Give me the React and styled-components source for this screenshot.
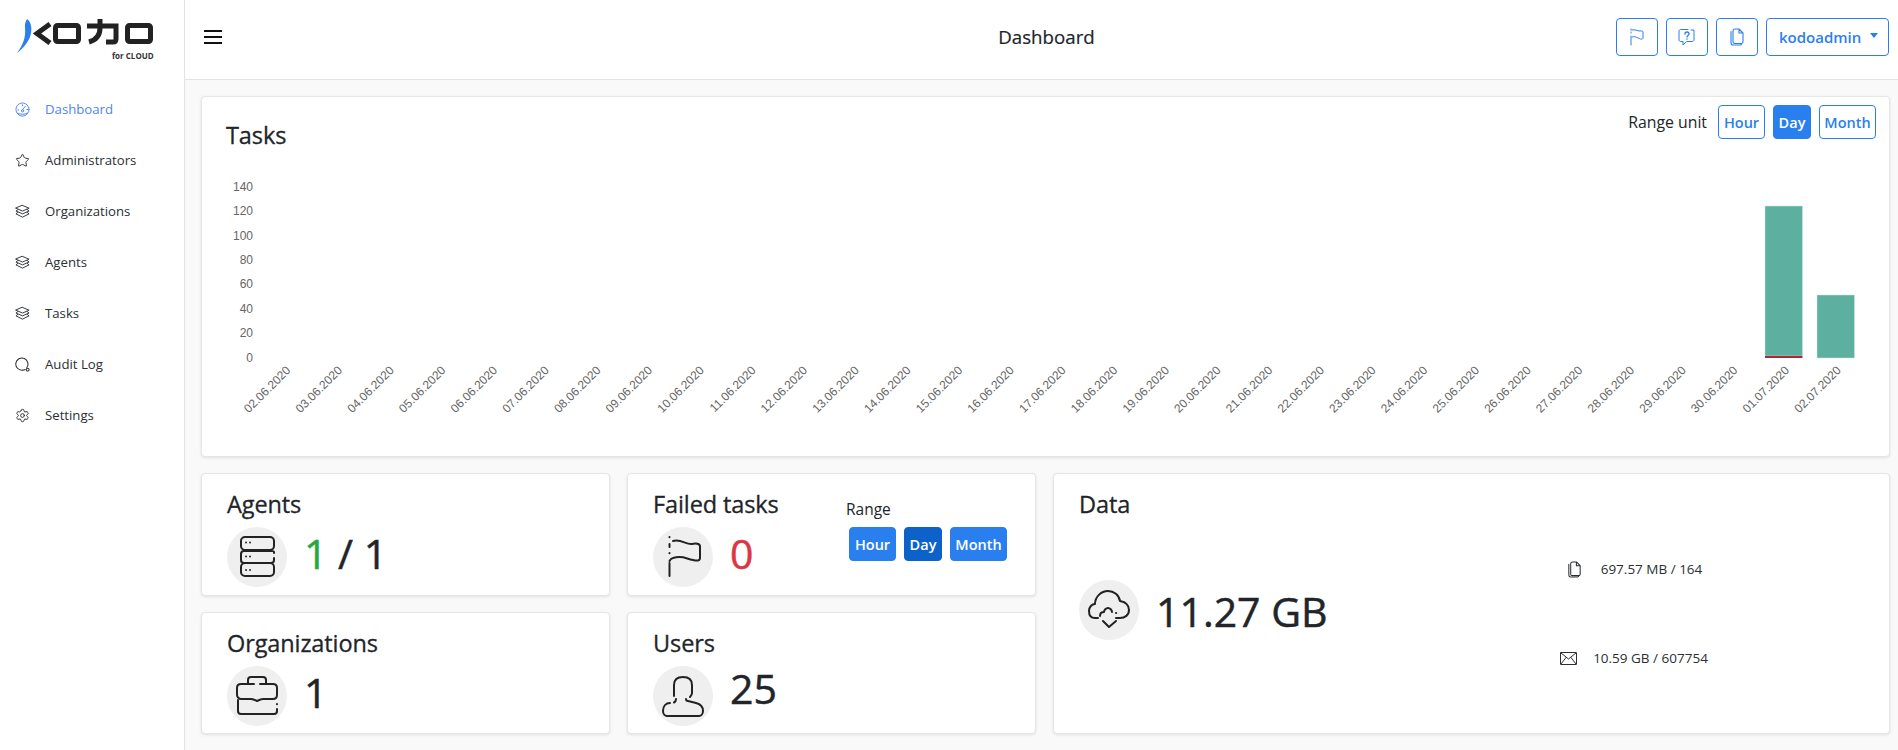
import React from 'react'
import styled, { createGlobalStyle } from 'styled-components'
import { Star, Settings } from 'lucide-react'

const BLUE = '#2a7fef'
const INK = '#212529'
const FONT = `'Open Sans', Lato, sans-serif`

const GlobalStyle = createGlobalStyle`
  * { box-sizing: border-box; }
  html, body { margin: 0; height: 100%; }
  body {
    background: #f9f9f9;
    color: ${INK};
    font-family: ${FONT};
    overflow: hidden;
  }
`

const Shell = styled.div`
  display: grid;
  grid-template-columns: 185px 1fr;
  width: 1898px;
  height: 750px;
`

const Sidebar = styled.aside`
  background: #fff;
  border-right: 1px solid #e3e3e3;
`

const LogoBox = styled.div`
  position: relative;
  height: 83.500px;
  padding: 17px 0 0 16px;
`

const LogoCaption = styled.span`
  position: absolute;
  top: 50px;
  left: 112px;
  font-size: 8px;
  font-weight: 700;
  color: #333;
`

const Nav = styled.nav`
  display: flex;
  flex-direction: column;
`

const NavItem = styled.a`
  display: flex;
  align-items: center;
  gap: 15px;
  height: 51px;
  padding-left: 15px;
  font-size: 13.2px;
  color: ${p => (p.$active ? '#4f86f0' : '#2b2f33')};

  svg {
    flex: none;
    width: 15px;
    height: 15px;
  }
`

const Main = styled.div`
  display: flex;
  flex-direction: column;
  min-width: 0;
`

const Header = styled.header`
  display: grid;
  grid-template-columns: 1fr auto 1fr;
  align-items: center;
  height: 80px;
  padding: 0 9px 6px 19px;
  background: #fff;
  border-bottom: 1px solid #e3e3e3;
`

const Burger = styled.button`
  display: flex;
  flex-direction: column;
  gap: 4px;
  width: 18px;
  padding: 0;
  background: none;
  border: 0;

  span {
    height: 2px;
    background: #111;
  }
`

const PageTitle = styled.h1`
  margin: 0;
  font-size: 18.700px;
  font-weight: 500;
  -webkit-text-stroke: 0.2px ${INK};
`

const HeaderActions = styled.div`
  display: flex;
  justify-content: flex-end;
  gap: 8px;
`

const IconButton = styled.button`
  display: flex;
  align-items: center;
  justify-content: center;
  width: 42px;
  height: 38px;
  padding: 0;
  color: ${BLUE};
  background: #fff;
  border: 1px solid ${BLUE};
  border-radius: 4px;
`

const UserButton = styled.button`
  display: flex;
  align-items: center;
  gap: 9px;
  width: 123px;
  height: 38px;
  padding: 0 0 0 12px;
  font: 600 15px ${FONT};
  color: ${BLUE};
  background: #fff;
  border: 1px solid ${BLUE};
  border-radius: 4px;

  &::after {
    content: '';
    border-top: 5px solid ${BLUE};
    border-left: 4px solid transparent;
    border-right: 4px solid transparent;
    margin-top: -2px;
  }
`

const Content = styled.main`
  display: flex;
  flex-direction: column;
  gap: 16px;
  padding: 16px 8px 0 16px;
`

const Card = styled.section`
  background: #fff;
  border: 1px solid #e6e6e6;
  border-radius: 4px;
  box-shadow: 0 1px 3px rgba(0, 0, 0, 0.1);
`

const TasksCard = styled(Card)`
  height: 361px;
`

const TasksHead = styled.div`
  display: flex;
  justify-content: space-between;
  height: 73px;
  padding: 8px 13px 0 24px;
`

const CardTitle = styled.h2`
  margin: 0;
  font-size: 23.500px;
  line-height: 30px;
  font-weight: 500;
  letter-spacing: -0.1px;
  -webkit-text-stroke: 0.3px ${INK};
`

const TasksTitle = styled(CardTitle)`
  margin-top: 15px;
`

const RangeUnit = styled.div`
  display: flex;
  align-items: center;
  align-self: flex-start;
  gap: 8px;
`

const RangeLabel = styled.span`
  margin-right: 3px;
  font-size: 15.800px;
`

const RangeButton = styled.button`
  height: 34px;
  width: ${p => p.$w}px;
  padding: 0;
  font: 600 14.500px ${FONT};
  color: ${p => (p.$filled ? '#fff' : BLUE)};
  background: ${p => (p.$filled ? (p.$dark ? '#0d62c9' : BLUE) : '#fff')};
  border: 1px solid ${p => (p.$filled ? (p.$dark ? '#0d62c9' : BLUE) : BLUE)};
  border-radius: 4px;
`

const ChartSvg = styled.svg`
  display: block;

  text {
    font-family: 'Liberation Sans', Arial, sans-serif;
    font-size: 12px;
    fill: #666;
  }
`

const StatsGrid = styled.div`
  display: grid;
  grid-template-columns: 409px 409px 1fr;
  grid-template-rows: 123px 122px;
  gap: 16px 17px;
`

const StatCard = styled(Card)`
  position: relative;
  padding: 15px 25px 0;
`

const DataCard = styled(Card)`
  grid-column: 3;
  grid-row: 1 / span 2;
  display: grid;
  grid-template-columns: 1fr 460px;
  padding: 15px 25px 0;
`

const StatRow = styled.div`
  display: flex;
  align-items: center;
  gap: 17px;
  margin-top: 8px;
`

const IconCircle = styled.div`
  flex: none;
  width: 60px;
  height: 60px;
  background: #efefef;
  border-radius: 50%;

  svg {
    display: block;
  }
`

const Value = styled.div`
  position: relative;
  top: ${p => p.$shift ?? -4}px;
  font-size: 41px;
  line-height: 48px;
  font-weight: 500;
  -webkit-text-stroke: 0.5px currentColor;
  color: ${p => p.$color || INK};

  span {
    color: ${p => p.$accent || 'inherit'};
  }
`

const MiniRange = styled.div`
  position: absolute;
  top: 25px;
  left: 221px;
`

const MiniLabel = styled.div`
  margin-left: -3px;
  font-size: 15.500px;
  line-height: 20px;
  margin-bottom: 8px;
`

const MiniButtons = styled.div`
  display: flex;
  gap: 8px;
`

const DataMain = styled.div`
  display: flex;
  flex-direction: column;
`

const DataRow = styled(StatRow)`
  margin-top: 61px;
`

const DataSide = styled.div`
  display: flex;
  flex-direction: column;
  align-items: center;
  gap: 67px;
  padding-top: 69px;
`

const SideItem = styled.div`
  display: flex;
  align-items: center;
  gap: ${p => p.$gap}px;
  height: 22px;
  font-size: 13.500px;
  color: #2b2f33;
`

const Line = { fill: 'none', stroke: 'currentColor', strokeLinecap: 'round', strokeLinejoin: 'round' }

const KodoLogo = () => (
  <svg width="140" height="40" viewBox="0 0 140 40">
    <path d="M1 36C7 28 10 20 9 11c-.4-4 .4-6 2-9 4 3 5 8 4 14-1 7-7 15-14 20z" fill="#2a7fef" />
    <g fill="none" stroke="#222" strokeWidth="5">
      <path d="M34 7 L21 16.5 L34 26" />
      <rect x="39.5" y="8.500" width="23" height="16" rx="2" />
      <path d="M71 9H100V22c0 2-1 3-3 3h-7" />
      <path d="M84 2V11c0 7-4 12-11 14" />
      <rect x="111.500" y="8.500" width="23" height="16" rx="2" />
    </g>
  </svg>
)

const GaugeIcon = () => (
  <svg viewBox="0 0 16 16" {...Line} strokeWidth="1">
    <circle cx="8" cy="8" r="7" />
    <path d="M8 8.500l3-4M3 8.500h1M8 3v1M12.500 8h1M3 12c3 1.500 7 1.500 10 0" />
    <circle cx="8" cy="9.500" r="1.200" />
  </svg>
)

const StackIcon = () => (
  <svg viewBox="0 0 16 16" {...Line} strokeWidth="1">
    <path d="M8 1.500 15 4.500 8 7.500 1 4.500z" />
    <path d="M3 6 1 7.500 8 10.500l7-3L13 6" />
    <path d="M3 9 1 10.500 8 14l7-3.500L13 9" />
  </svg>
)

const SearchIcon = () => (
  <svg viewBox="0 0 16 16" {...Line} strokeWidth="1.100">
    <path d="M12.500 11.500A6.500 6.500 0 1 0 8 14c1 0 2-.2 2.800-.7" />
    <circle cx="13.500" cy="13.500" r="1.500" />
  </svg>
)

const FlagSmall = () => (
  <svg width="16" height="18" viewBox="0 0 16 18" {...Line} strokeWidth="1">
    <path d="M2 1v1M2 4v1M2 8v9" />
    <path d="M3 2c3-1 5 1 8 1 2 0 3 0 3 1v6c0 2-3 1-5 0-2-1-4-2-6-1" />
  </svg>
)

const HelpSmall = () => (
  <svg width="18" height="18" viewBox="0 0 18 18" {...Line} strokeWidth="1">
    <path d="M13 2h3v10c0 1-1 1.500-2 1.500H8.500L5 17v-3.500H3c-1 0-2-.5-2-1.500V3c0-1 1-1.500 2-1.500h7" />
    <path d="M7 6c0-1.200 1-2 2-2s2 .8 2 2c0 1.500-2 1.500-2 3M9 11v.2" strokeWidth="1.300" />
  </svg>
)

const CopySmall = ({ size = 18 }) => (
  <svg width={size} height={size} viewBox="0 0 18 18" {...Line} strokeWidth="1.100">
    <path d="M7 1h4l4 4v9c0 1-1 1.500-2 1.500H7c-1 0-2-.5-2-1.500V3c0-1 1-2 2-2zM11 1v4h4" />
    <path d="M3 3.500v11.500c0 1 1 2 2 2h7c1 0 1.500-.5 1.500-1" />
  </svg>
)

const MailSmall = () => (
  <svg width="17" height="13" viewBox="0 0 17 13" {...Line} strokeWidth="1">
    <rect x="0.500" y="0.500" width="16" height="12" rx="0.500" />
    <path d="M1 1l7.500 6L16 1M1 12l5-6.500M16 12l-5-6.500" />
  </svg>
)

const ServerIcon = () => (
  <svg width="60" height="60" viewBox="0 0 60 60" {...Line} strokeWidth="2" stroke="#222">
    <rect x="14" y="10" width="33" height="13" rx="4" />
    <path d="M47 26v-1c0-1-1-1-3-1H17c-2 0-3 1-3 3v6c0 2 1 3 3 3h27c2 0 3-1 3-3v-2" />
    <rect x="14" y="36" width="33" height="13" rx="4" />
    <path d="M19 15.500h.1M23 15.500h.1M19 29.500h.1M23 29.500h.1M19 43h.1M23 43h.1" strokeWidth="1.800" />
  </svg>
)

const BriefcaseIcon = () => (
  <svg width="60" height="60" viewBox="0 0 60 60" {...Line} strokeWidth="2" stroke="#222">
    <path d="M21 17v-3c0-2 1-3 3-3h12c2 0 3 1 3 3v3" />
    <path d="M33 18h13c2 0 4 1 4 4v7c0 2-1 4-4 4H36c-2 0-4 1-6 2-2-1-4-2-6-2H14c-2 0-4-2-4-4v-7c0-3 2-4 4-4h13" />
    <path d="M11 34v11c0 2 1 3 3 3h33c2 0 3-1 3-3v-2M50 38v.2" />
  </svg>
)

const FlagIcon = () => (
  <svg width="60" height="60" viewBox="0 0 60 60" {...Line} strokeWidth="2" stroke="#222">
    <path d="M16.500 10v.2M16.500 17v3M16.500 26v.2M16.500 36v13" />
    <path d="M20 14c8-2 12 3 18 3 3 0 8-2 9 2v12c0 3-3 3-7 2-7-1-10-5-20-2-2 .5-3 2-3.500 3" />
  </svg>
)

const UserIcon = () => (
  <svg width="60" height="60" viewBox="0 0 60 60" {...Line} strokeWidth="2" stroke="#222">
    <path d="M21 30V19c0-5 3-8 9-8s9 3 9 8v8c0 2-1 3-2 4" />
    <path d="M17 37c-4 0-7 3-7 8 0 3 2 5 4 5h32c2 0 4-2 4-5 0-4-3-7-7-8l-8-2c-1 0-2-1-2-2" />
    <path d="M23 33c0 2-1 3-2 3.500" />
  </svg>
)

const CloudIcon = () => (
  <svg width="60" height="60" viewBox="0 0 60 60" {...Line} strokeWidth="2" stroke="#222">
    <path d="M19 38h-3c-4 0-6-3-6-7 0-4 3-7 6-7 0-7 6-13 13-13 6 0 11 4 12 10 5 1 9 4 9 9s-4 8-9 8h-4" />
    <path d="M21 36c0-3 2-4 4-4 0-2 2-4 4-4s4 2 4 4" />
    <path d="M37 33h.2M24 41l6 6 7-6" />
  </svg>
)

// chart data, one tick per day
const days = []
for (let i = 0; i < 29; i++) days.push(`${String(i + 2).padStart(2, '0')}.06.2020`)
days.push('01.07.2020', '02.07.2020')

const yTicks = [0, 20, 40, 60, 80, 100, 120, 140]
const ORIGIN_X = 202
const ORIGIN_Y = 170
const Y0 = 358 - ORIGIN_Y
const STEP_X = 51.68
const FIRST_X = 284.3 - ORIGIN_X

const TaskChart = () => (
  <ChartSvg width="1687" height="285" viewBox="0 0 1687 285">
    {yTicks.map(t => (
      <text key={t} x={253 - ORIGIN_X} y={Y0 - 0.3 - (t / 20) * 24.43 + 4} textAnchor="end">
        {t}
      </text>
    ))}
    {days.map((d, i) => {
      const x = FIRST_X + i * STEP_X + 7
      const y = 371 - ORIGIN_Y
      return (
        <text key={d} x={x} y={y} textAnchor="end" transform={`rotate(-45 ${x} ${y})`}>
          {d}
        </text>
      )
    })}
    <rect x={1765 - ORIGIN_X} y={206 - ORIGIN_Y} width="37.500" height="150" fill="#5daf9f" stroke="#cfe7e2" strokeWidth="0.500" />
    <rect x={1765 - ORIGIN_X} y={356 - ORIGIN_Y} width="37.500" height="2" fill="#b5232f" />
    <rect x={1817 - ORIGIN_X} y={295 - ORIGIN_Y} width="37.500" height="63" fill="#5daf9f" stroke="#cfe7e2" strokeWidth="0.500" />
  </ChartSvg>
)

const navItems = [
  { label: 'Dashboard', icon: <GaugeIcon />, active: true },
  { label: 'Administrators', icon: <Star strokeWidth={1.500} /> },
  { label: 'Organizations', icon: <StackIcon /> },
  { label: 'Agents', icon: <StackIcon /> },
  { label: 'Tasks', icon: <StackIcon /> },
  { label: 'Audit Log', icon: <SearchIcon /> },
  { label: 'Settings', icon: <Settings strokeWidth={1.500} /> },
]

const App = () => (
  <>
    <GlobalStyle />
    <Shell>
      <Sidebar>
        <LogoBox>
          <KodoLogo />
          <LogoCaption>for CLOUD</LogoCaption>
        </LogoBox>
        <Nav>
          {navItems.map(item => (
            <NavItem key={item.label} $active={item.active}>
              {item.icon}
              {item.label}
            </NavItem>
          ))}
        </Nav>
      </Sidebar>
      <Main>
        <Header>
          <Burger aria-label="Menu">
            <span />
            <span />
            <span />
          </Burger>
          <PageTitle>Dashboard</PageTitle>
          <HeaderActions>
            <IconButton><FlagSmall /></IconButton>
            <IconButton><HelpSmall /></IconButton>
            <IconButton><CopySmall /></IconButton>
            <UserButton>kodoadmin</UserButton>
          </HeaderActions>
        </Header>
        <Content>
          <TasksCard>
            <TasksHead>
              <TasksTitle>Tasks</TasksTitle>
              <RangeUnit>
                <RangeLabel>Range unit</RangeLabel>
                <RangeButton $w={47}>Hour</RangeButton>
                <RangeButton $w={38} $filled>Day</RangeButton>
                <RangeButton $w={57}>Month</RangeButton>
              </RangeUnit>
            </TasksHead>
            <TaskChart />
          </TasksCard>
          <StatsGrid>
            <StatCard>
              <CardTitle>Agents</CardTitle>
              <StatRow>
                <IconCircle><ServerIcon /></IconCircle>
                <Value $accent="#28a745"><span>1</span> / 1</Value>
              </StatRow>
            </StatCard>
            <StatCard>
              <CardTitle>Failed tasks</CardTitle>
              <StatRow>
                <IconCircle><FlagIcon /></IconCircle>
                <Value $color="#dc3545">0</Value>
              </StatRow>
              <MiniRange>
                <MiniLabel>Range</MiniLabel>
                <MiniButtons>
                  <RangeButton $w={47} $filled>Hour</RangeButton>
                  <RangeButton $w={38} $filled $dark>Day</RangeButton>
                  <RangeButton $w={57} $filled>Month</RangeButton>
                </MiniButtons>
              </MiniRange>
            </StatCard>
            <DataCard>
              <DataMain>
                <CardTitle>Data</CardTitle>
                <DataRow>
                  <IconCircle><CloudIcon /></IconCircle>
                  <Value $shift={1}>11.27 GB</Value>
                </DataRow>
              </DataMain>
              <DataSide>
                <SideItem $gap={18}><CopySmall size={17} />697.57 MB / 164</SideItem>
                <SideItem $gap={16}><MailSmall />10.59 GB / 607754</SideItem>
              </DataSide>
            </DataCard>
            <StatCard>
              <CardTitle>Organizations</CardTitle>
              <StatRow>
                <IconCircle><BriefcaseIcon /></IconCircle>
                <Value>1</Value>
              </StatRow>
            </StatCard>
            <StatCard>
              <CardTitle>Users</CardTitle>
              <StatRow>
                <IconCircle><UserIcon /></IconCircle>
                <Value $shift={-8}>25</Value>
              </StatRow>
            </StatCard>
          </StatsGrid>
        </Content>
      </Main>
    </Shell>
  </>
)

export default App
